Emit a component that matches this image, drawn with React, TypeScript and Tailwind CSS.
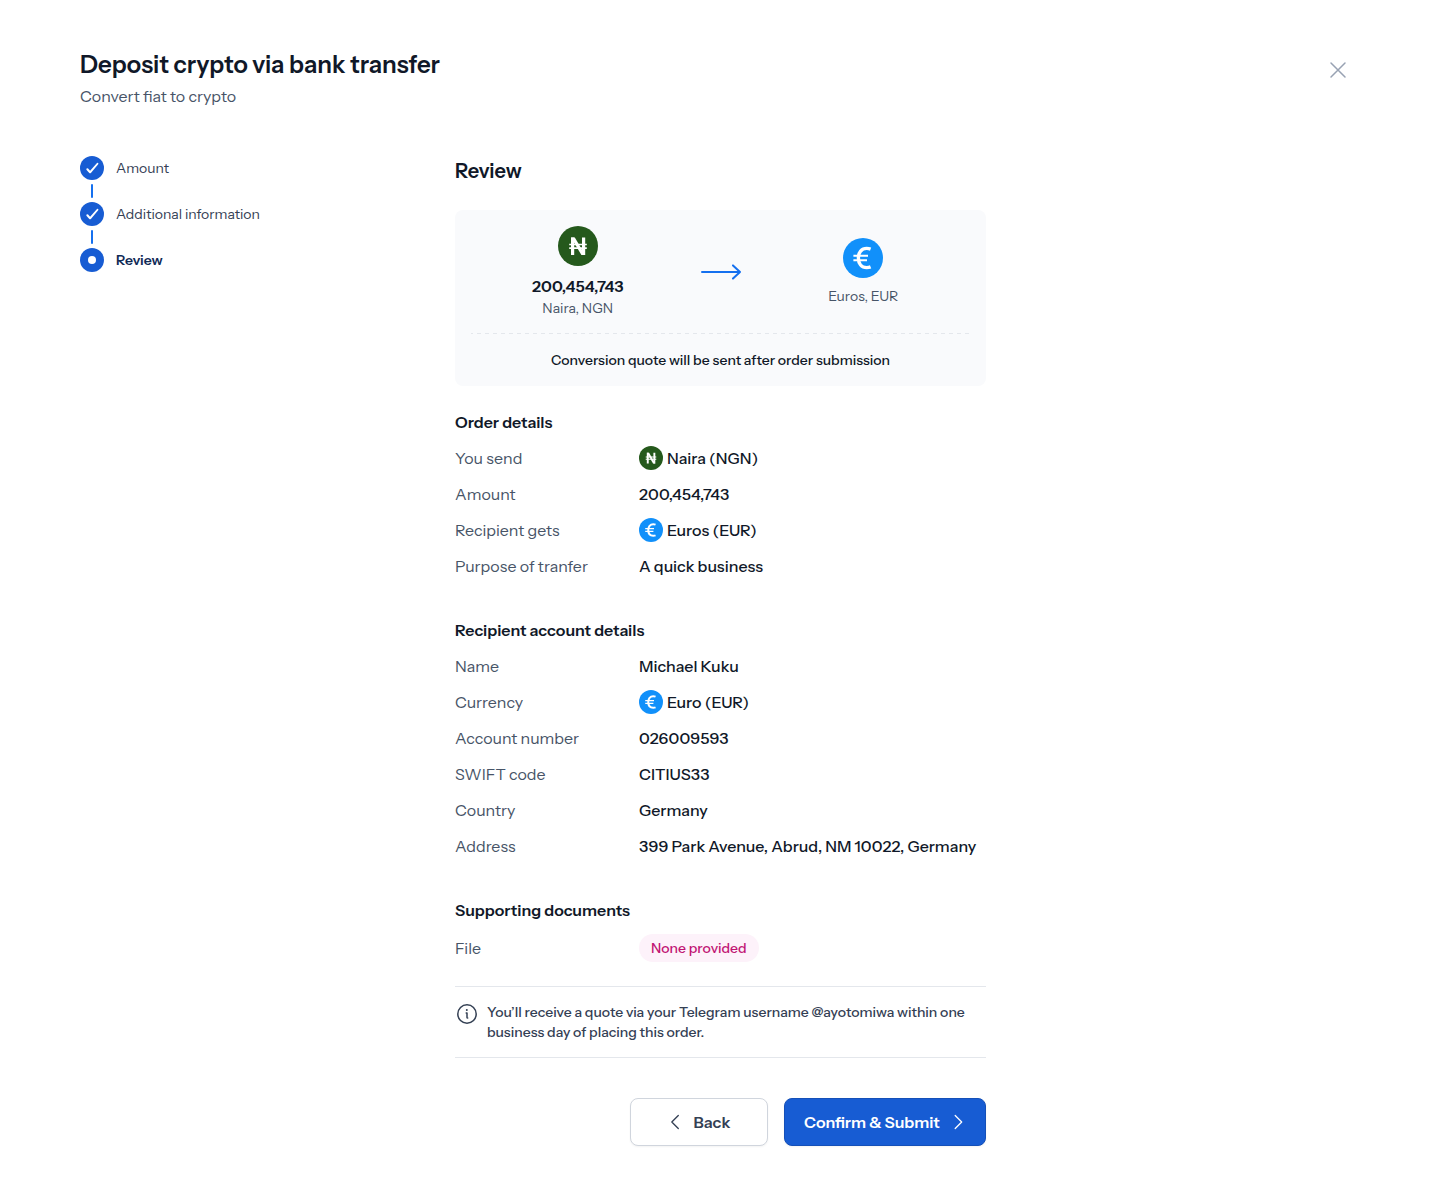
import type { ReactNode } from "react";

function NairaIcon({ className }: { className: string }) {
  return (
    <svg viewBox="0 0 40 40" className={className} fill="none" aria-hidden="true">
      <circle cx="20" cy="20" r="20" fill="#25591C" />
      <path d="M14.6 29V11.4M25.6 29V11.4" stroke="#fff" strokeWidth="3.2" />
      <path d="M13 11.4h3.8L27.2 29h-3.8z" fill="#fff" />
      <path d="M11.2 18.5h17.6M11.2 22.2h17.6" stroke="#fff" strokeWidth="1.7" />
    </svg>
  );
}

function EuroIcon({ className }: { className: string }) {
  return (
    <svg viewBox="0 0 40 40" className={className} fill="none" aria-hidden="true">
      <circle cx="20" cy="20" r="20" fill="#1190FA" />
      <path
        d="M27.6 11.1c-1.3-.5-2.5-.7-3.9-.7-5.200 0-8.300 3.800-8.300 9.600s3.100 9.600 8.300 9.600c1.500 0 2.700-.2 3.900-.7"
        stroke="#fff"
        strokeWidth="3.4"
      />
      <path d="M10.400 17.700h14.600M10.400 22.300h13.600" stroke="#fff" strokeWidth="2.1" />
    </svg>
  );
}

function Step({ label, done }: { label: string; done: boolean }) {
  return (
    <li
      aria-current={done ? undefined : "step"}
      className="group flex gap-3 text-sm leading-6"
    >
      <span className="flex flex-col items-center gap-1">
        <svg viewBox="0 0 24 24" className="size-6" fill="none" aria-hidden="true">
          <circle cx="12" cy="12" r="12" fill="#175CD3" />
          {done ? (
            <path
              d="M17 7.100L10.100 14.700L8.100 12.500Q7.300 11.900 6.600 12.500Q6 13.200 6.600 14L9.300 17Q10.100 17.700 10.900 16.900L18.200 8.200Q18.700 7.500 18.100 7Q17.500 6.600 17 7.100Z"
              fill="#fff"
            />
          ) : (
            <circle cx="12" cy="12" r="4" fill="#fff" />
          )}
        </svg>
        <span className="mb-1 h-3.5 w-0.5 rounded-full bg-[#1570EF] group-last:hidden" />
      </span>
      <span className={done ? "text-[#344054]" : "font-semibold text-[#102A56]"}>{label}</span>
    </li>
  );
}

function Row({ label, children }: { label: string; children: ReactNode }) {
  return (
    <div className="flex items-center">
      <dt className="w-46 shrink-0 text-[#475467]">{label}</dt>
      <dd className="flex min-w-0 items-center gap-1 font-medium text-[#101828]">{children}</dd>
    </div>
  );
}

function Section({ title, children }: { title: string; children: ReactNode }) {
  return (
    <section className="text-base leading-6">
      <h3 className="mb-3 font-semibold">{title}</h3>
      <dl className="flex flex-col gap-3">{children}</dl>
    </section>
  );
}

export default function App() {
  return (
    <div className="min-h-screen bg-white px-20 pt-12 pb-11 font-['Instrument_Sans',Inter,sans-serif] text-[#101828]">
      <header className="flex items-start justify-between">
        <div>
          <h1 className="text-2xl leading-[34px] font-semibold">Deposit crypto via bank transfer</h1>
          <p className="mt-0.5 text-base leading-6 text-[#475467]">Convert fiat to crypto</p>
        </div>
        <button type="button" aria-label="Close" className="flex size-11 items-center justify-center">
          <svg viewBox="0 0 24 24" className="size-6" fill="none" aria-hidden="true">
            <path d="M5 5l14 14M19 5L5 19" stroke="#98A2B3" strokeWidth="1.5" strokeLinecap="round" />
          </svg>
        </button>
      </header>

      <div className="mt-12 grid grid-cols-[375px_minmax(0,531px)]">
        <nav aria-label="Progress">
          <ol>
            <Step label="Amount" done />
            <Step label="Additional information" done />
            <Step label="Review" done={false} />
          </ol>
        </nav>

        <main>
          <h2 className="text-xl leading-[30px] font-semibold">Review</h2>

          <div className="mt-6 rounded-lg bg-[#F9FAFC] p-4 text-sm leading-5">
            <div className="grid grid-cols-[1fr_40px_1fr] items-center gap-4 pb-[15px]">
              <div className="flex flex-col items-center">
                <NairaIcon className="size-10" />
                <p className="mt-2 text-base leading-6 font-semibold">200,454,743</p>
                <p className="text-[#475467]">Naira, NGN</p>
              </div>
              <svg viewBox="0 0 40 16" className="w-10" fill="none" aria-hidden="true">
                <path
                  d="M1 8h38M32 1.4L39 8l-7 6.6"
                  stroke="#1570EF"
                  strokeWidth="2"
                  strokeLinecap="round"
                  strokeLinejoin="round"
                />
              </svg>
              <div className="flex flex-col items-center gap-2">
                <EuroIcon className="size-10" />
                <p className="text-[#475467]">Euros, EUR</p>
              </div>
            </div>
            <svg className="block h-px w-full" aria-hidden="true">
              <line x1="0" y1="0.5" x2="100%" y2="0.5" stroke="#E4E7EC" strokeDasharray="4 4" strokeDashoffset="2" />
            </svg>
            <p className="pt-4 text-center font-medium">
              Conversion quote will be sent after order submission
            </p>
          </div>

          <div className="mt-6 flex flex-col gap-10">
            <Section title="Order details">
              <Row label="You send">
                <NairaIcon className="size-6" />
                Naira (NGN)
              </Row>
              <Row label="Amount">200,454,743</Row>
              <Row label="Recipient gets">
                <EuroIcon className="size-6" />
                Euros (EUR)
              </Row>
              <Row label="Purpose of tranfer">A quick business</Row>
            </Section>

            <Section title="Recipient account details">
              <Row label="Name">Michael Kuku</Row>
              <Row label="Currency">
                <EuroIcon className="size-6" />
                Euro (EUR)
              </Row>
              <Row label="Account number">026009593</Row>
              <Row label="SWIFT code">CITIUS33</Row>
              <Row label="Country">Germany</Row>
              <Row label="Address">399 Park Avenue, Abrud, NM 10022, Germany</Row>
            </Section>

            <Section title="Supporting documents">
              <Row label="File">
                <span className="rounded-full bg-[#FDF2FA] px-3 py-1 text-sm leading-5 text-[#C11574]">
                  None provided
                </span>
              </Row>
            </Section>
          </div>

          <div className="mt-6 flex gap-2 border-y border-[#E4E7EC] py-[15px]">
            <svg viewBox="0 0 24 24" className="size-6 shrink-0" fill="none" aria-hidden="true">
              <circle cx="12" cy="12" r="9.2" stroke="#344054" strokeWidth="1.5" />
              <path
                d="M11.2 10.9h.8v4.500q0 .7.700.7"
                stroke="#344054"
                strokeWidth="1.5"
                strokeLinecap="round"
                strokeLinejoin="round"
              />
              <circle cx="11.8" cy="7.9" r="1" fill="#344054" />
            </svg>
            <p className="text-sm leading-5 font-medium text-[#344054]">
              You’ll receive a quote via your Telegram username @ayotomiwa within one business day of
              placing this order.
            </p>
          </div>

          <div className="mt-10 flex justify-end gap-4 text-base leading-6 font-semibold">
            <button
              type="button"
              className="flex h-12 w-[138px] items-center justify-center gap-2 rounded-lg border border-[#D0D5DD] bg-white pr-0.5 text-[#344054] shadow-xs"
            >
              <svg viewBox="0 0 20 20" className="size-5" fill="none" aria-hidden="true">
                <path d="M12.3 3.5L5.8 10l6.5 6.5" stroke="currentColor" strokeWidth="1.3" strokeLinecap="round" strokeLinejoin="round" />
              </svg>
              Back
            </button>
            <button
              type="button"
              className="flex h-12 w-[202px] items-center justify-between rounded-lg border border-[#1550B8] bg-[#175CD3] px-[19px] whitespace-nowrap text-white shadow-xs"
            >
              Confirm &amp; Submit
              <svg viewBox="0 0 20 20" className="size-5" fill="none" aria-hidden="true">
                <path d="M9.2 3.5L15.7 10l-6.5 6.5" stroke="currentColor" strokeWidth="1.3" strokeLinecap="round" strokeLinejoin="round" />
              </svg>
            </button>
          </div>
        </main>
      </div>
    </div>
  );
}
